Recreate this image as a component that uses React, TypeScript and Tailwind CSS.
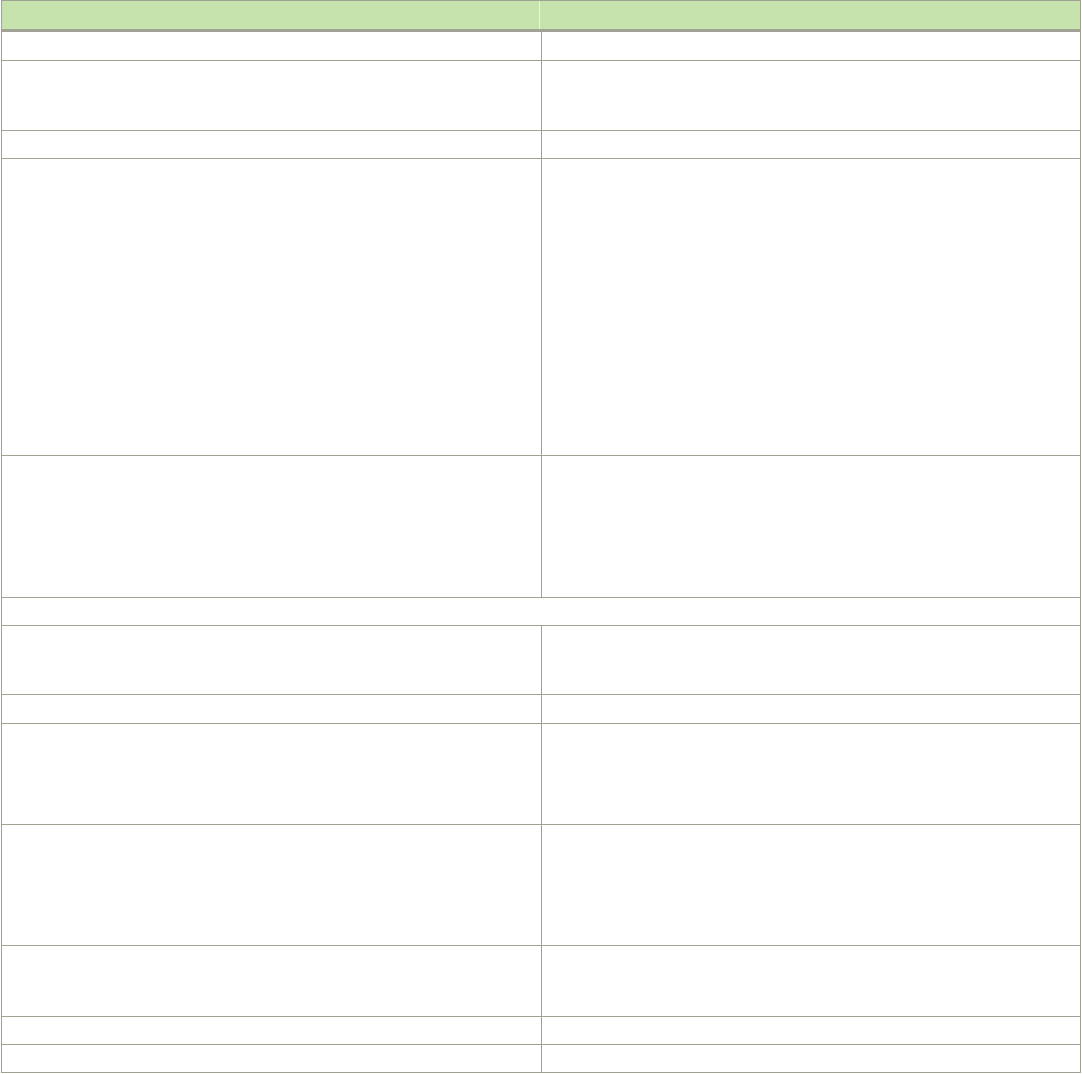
const rows: { h: number; span?: boolean }[] = [
  { h: 28 },
  { h: 69 },
  { h: 27 },
  { h: 296 },
  { h: 141 },
  { h: 27, span: true },
  { h: 68 },
  { h: 28 },
  { h: 100 },
  { h: 120 },
  { h: 70 },
  { h: 27 },
  { h: 27 },
];

export default function App() {
  return (
    <div className="min-h-screen bg-white" style={{ fontFamily: '"Liberation Sans", Arial, sans-serif' }}>
      <div className="ml-px w-[1080px] border border-[#a2a294]">
        <div className="flex h-[31px] border-b-[3px] border-[#a2a294] bg-[#c6e3ae]">
          <div className="w-[538px] border-r border-[#e9f3e0]" />
          <div className="flex-1" />
        </div>
        {rows.map((r, i) => (
          <div
            key={i}
            className={`flex ${i < rows.length - 1 ? "border-b border-[#a2a294]" : ""}`}
            style={{ height: r.h + (i < rows.length - 1 ? 1 : 0) }}
          >
            {r.span ? (
              <div className="flex-1" />
            ) : (
              <>
                <div className="w-[540px] border-r border-[#a2a294]" />
                <div className="flex-1" />
              </>
            )}
          </div>
        ))}
      </div>
    </div>
  );
}
